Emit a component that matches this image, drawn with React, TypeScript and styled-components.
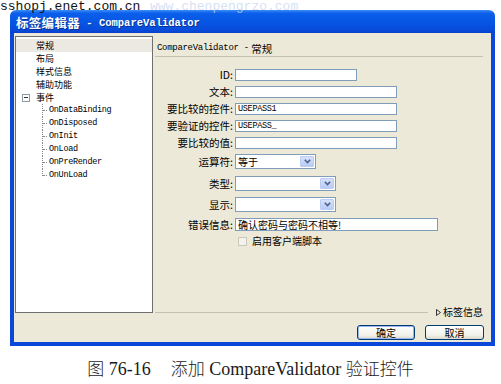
import React from 'react';
import styled, { createGlobalStyle } from 'styled-components';

const GlobalStyle = createGlobalStyle`
    html, body {
        margin: 0;
        padding: 0;
        background: #fff;
    }
    body {
        font-family: "Noto Sans CJK SC", "Liberation Sans", sans-serif;
        color: #000;
    }
`;

const Page = styled.div`
    position: relative;
    box-sizing: border-box;
    width: 501px;
    height: 384px;
    padding: 10px 0 0 10px;
    overflow: hidden;
    background: #fff;
`;

const Watermark = styled.div<{ $x: number; $color: string }>`
    position: absolute;
    top: 0;
    left: ${(p) => p.$x}px;
    z-index: 2;
    font-family: "Liberation Mono", monospace;
    font-size: 13px;
    line-height: 13px;
    color: ${(p) => p.$color};
    white-space: nowrap;
`;

const Window = styled.div`
    display: flex;
    flex-direction: column;
    width: 485px;
    height: 336px;
`;

const TitleBar = styled.div`
    display: flex;
    align-items: center;
    height: 23px;
    padding: 2px 0 0 6px;
    box-sizing: border-box;
    border-radius: 6px 6px 0 0;
    background: linear-gradient(#3d8df7 0%, #0b5fea 14%, #0655e4 55%, #0a4ad9 90%, #0840c8 100%);
    color: #fff;
    font-weight: 700;
    text-shadow: 1px 1px 0 #0a2f8f;
    white-space: nowrap;
`;

const TitleCn = styled.span`
    font-size: 12.5px;
    letter-spacing: 0.3px;
`;

const TitleLatin = styled.span`
    font-family: "Liberation Mono", monospace;
    font-size: 10.5px;
`;

const Frame = styled.div`
    flex: 1;
    display: flex;
    flex-direction: column;
    border: 4px solid #0b48d9;
    border-top: none;
    background: #ece9d8;
`;

const Content = styled.div`
    display: flex;
    height: 283px;
    padding: 3px 0 0 1px;
`;

const Tree = styled.div`
    box-sizing: border-box;
    width: 138px;
    height: 277px;
    padding-top: 2px;
    border: 1px solid #6f6f6f;
    background: #fff;
`;

const TreeRow = styled.div<{ $selected?: boolean; $indent: number }>`
    display: flex;
    align-items: center;
    height: 13px;
    padding-left: ${(p) => p.$indent}px;
    background: ${(p) => (p.$selected ? '#ebe9e1' : 'transparent')};
    font-size: 9px;
    line-height: 13px;
`;

const Expander = styled.span`
    position: relative;
    box-sizing: border-box;
    width: 8px;
    height: 8px;
    margin-right: 6px;
    border: 1px solid #8e9aa6;
    background: #fff;

    &::after {
        content: '';
        position: absolute;
        left: 1px;
        top: 2px;
        width: 4px;
        height: 1px;
        background: #333;
    }
`;

const ChildList = styled.div`
    margin-left: 26px;
`;

const ChildItem = styled.div<{ $last?: boolean }>`
    position: relative;
    height: 13px;
    padding-left: 7px;
    font-family: "Liberation Mono", monospace;
    font-size: 8.5px;
    letter-spacing: -0.3px;
    line-height: 13px;

    &::before {
        content: '';
        position: absolute;
        left: 0;
        top: 0;
        height: ${(p) => (p.$last ? '7px' : '13px')};
        border-left: 1px dotted #8a8a8a;
    }

    &::after {
        content: '';
        position: absolute;
        left: 1px;
        top: 6px;
        width: 4px;
        border-top: 1px dotted #8a8a8a;
    }
`;

const Main = styled.div`
    flex: 1;
    display: flex;
    flex-direction: column;
    margin: 0 8px 0 2px;
`;

const Header = styled.div`
    display: flex;
    align-items: center;
    height: 21px;
    padding: 4px 0 0 2px;
    box-sizing: border-box;
    border-bottom: 1px solid #c5c2b2;
    white-space: nowrap;
`;

const HeaderLatin = styled.span`
    font-family: "Liberation Mono", monospace;
    font-size: 9px;
    letter-spacing: -0.3px;
`;

const HeaderCn = styled.span`
    font-size: 10.5px;
`;

const Form = styled.div`
    display: flex;
    flex-direction: column;
    padding-top: 12px;
`;

const FieldRow = styled.div<{ $h: number; $gap: number }>`
    display: flex;
    align-items: center;
    height: ${(p) => p.$h}px;
    margin-top: ${(p) => p.$gap}px;
`;

const Label = styled.span`
    width: 80px;
    padding-right: 2px;
    box-sizing: border-box;
    text-align: right;
    font-size: 10.5px;
    line-height: 12px;
    white-space: nowrap;
`;

const TextBox = styled.div<{ $w: number; $h: number }>`
    display: flex;
    align-items: center;
    box-sizing: border-box;
    width: ${(p) => p.$w}px;
    height: ${(p) => p.$h}px;
    padding-left: 2px;
    border: 1px solid #7f9db9;
    background: #fff;
    white-space: nowrap;
    overflow: hidden;
`;

const MonoValue = styled.span`
    font-family: "Liberation Mono", monospace;
    font-size: 8.5px;
    letter-spacing: -0.3px;
`;

const CnValue = styled.span`
    font-size: 10px;
    line-height: 12px;
`;

const SelectBox = styled.div<{ $w: number }>`
    display: flex;
    align-items: center;
    box-sizing: border-box;
    width: ${(p) => p.$w}px;
    height: 15px;
    padding: 0 1px 0 2px;
    border: 1px solid #7f9db9;
    background: #fff;
`;

const SelectValue = styled.span`
    flex: 1;
    font-size: 10px;
    line-height: 12px;
`;

const DropButton = styled.span`
    display: flex;
    align-items: center;
    justify-content: center;
    box-sizing: border-box;
    width: 14px;
    height: 11px;
    border: 1px solid #bccdf5;
    border-radius: 1px;
    background: linear-gradient(#d6e1fb, #b7cbf6);
`;

const CheckRow = styled.div`
    display: flex;
    align-items: center;
    height: 12px;
    margin-top: 4px;
    padding-left: 83px;
`;

const CheckBox = styled.span`
    box-sizing: border-box;
    width: 9px;
    height: 9px;
    margin-right: 5px;
    border: 1px solid #cac8bb;
    background: #f3f2ec;
`;

const CheckText = styled.span`
    font-size: 10px;
    line-height: 12px;
`;

const Footer = styled.div`
    display: flex;
    align-items: center;
    height: 14px;
    margin-top: auto;
`;

const FooterLine = styled.div`
    flex: 1;
    border-top: 1px solid #c5c2b2;
`;

const MoreLink = styled.span`
    display: flex;
    align-items: center;
    gap: 2px;
    margin-left: 8px;
    font-size: 10px;
    line-height: 12px;
    white-space: nowrap;
`;

const ButtonRow = styled.div`
    display: flex;
    justify-content: flex-end;
    gap: 10px;
    height: 15px;
    margin-top: 6px;
    padding-right: 7px;
`;

const Button = styled.div<{ $w: number; $default?: boolean }>`
    display: flex;
    align-items: center;
    justify-content: center;
    box-sizing: border-box;
    width: ${(p) => p.$w}px;
    height: 15px;
    border: 1px solid #003c74;
    border-radius: 3px;
    background: linear-gradient(#ffffff, #f2f1ea 70%, #dcd8cb);
    box-shadow: ${(p) => (p.$default ? 'inset 0 0 0 1px #9ab8ef' : 'none')};
    font-size: 10px;
    line-height: 12px;
`;

const Caption = styled.div`
    display: flex;
    justify-content: center;
    gap: 20px;
    width: 501px;
    margin: 11px 0 0 -10px;
    font-family: "Liberation Serif", "Noto Sans CJK SC", serif;
    font-size: 18px;
    line-height: 22px;
    color: #1a1a1a;
    white-space: nowrap;
`;

const CaptionCn = styled.span`
    font-family: "Noto Sans CJK SC", sans-serif;
    font-weight: 300;
    font-size: 17px;
`;

const Chevron = () => (
    <svg width="7" height="5" viewBox="0 0 7 5">
        <polyline points="0.8,0.8 3.5,3.6 6.2,0.8" fill="none" stroke="#4d6185" strokeWidth="1.6" />
    </svg>
);

const Triangle = () => (
    <svg width="5" height="7" viewBox="0 0 5 7">
        <polygon points="0.5,0.5 4.5,3.5 0.5,6.5" fill="none" stroke="#222" strokeWidth="0.9" />
    </svg>
);

interface Field {
    label: string;
    kind: 'text' | 'select';
    width: number;
    height: number;
    gap: number;
    value?: string;
    mono?: boolean;
}

const fields: Field[] = [
    { label: 'ID:', kind: 'text', width: 122, height: 12, gap: 0 },
    { label: '文本:', kind: 'text', width: 162, height: 12, gap: 5 },
    { label: '要比较的控件:', kind: 'text', width: 162, height: 12, gap: 5, value: 'USEPASS1', mono: true },
    { label: '要验证的控件:', kind: 'text', width: 162, height: 12, gap: 5, value: 'USEPASS_', mono: true },
    { label: '要比较的值:', kind: 'text', width: 162, height: 12, gap: 5 },
    { label: '运算符:', kind: 'select', width: 81, height: 15, gap: 5, value: '等于' },
    { label: '类型:', kind: 'select', width: 101, height: 15, gap: 7 },
    { label: '显示:', kind: 'select', width: 101, height: 15, gap: 6 },
    { label: '错误信息:', kind: 'text', width: 203, height: 13, gap: 6, value: '确认密码与密码不相等!' },
];

const topItems = ['常规', '布局', '样式信息', '辅助功能'];
const events = ['OnDataBinding', 'OnDisposed', 'OnInit', 'OnLoad', 'OnPreRender', 'OnUnLoad'];

const App: React.FC = () => {
    return (
        <>
            <GlobalStyle />
            <Page>
                <Watermark $x={0} $color="#111">sshopj.enet.com.cn</Watermark>
                <Watermark $x={150} $color="rgba(200, 215, 240, 0.75)">www.chenpengrzo.com</Watermark>

                <Window>
                    <TitleBar>
                        <TitleCn>标签编辑器</TitleCn>
                        <TitleLatin>&nbsp;- CompareValidator</TitleLatin>
                    </TitleBar>

                    <Frame>
                        <Content>
                            <Tree>
                                {topItems.map((item, i) => (
                                    <TreeRow key={item} $indent={20} $selected={i === 0}>
                                        {item}
                                    </TreeRow>
                                ))}
                                <TreeRow $indent={6}>
                                    <Expander />
                                    事件
                                </TreeRow>
                                <ChildList>
                                    {events.map((ev, i) => (
                                        <ChildItem key={ev} $last={i === events.length - 1}>
                                            {ev}
                                        </ChildItem>
                                    ))}
                                </ChildList>
                            </Tree>

                            <Main>
                                <Header>
                                    <HeaderLatin>CompareValidator - </HeaderLatin>
                                    <HeaderCn>&nbsp;常规</HeaderCn>
                                </Header>

                                <Form>
                                    {fields.map((f) => (
                                        <FieldRow key={f.label} $h={f.height} $gap={f.gap}>
                                            <Label>{f.label}</Label>
                                            {f.kind === 'text' ? (
                                                <TextBox $w={f.width} $h={f.height}>
                                                    {f.value &&
                                                        (f.mono ? (
                                                            <MonoValue>{f.value}</MonoValue>
                                                        ) : (
                                                            <CnValue>{f.value}</CnValue>
                                                        ))}
                                                </TextBox>
                                            ) : (
                                                <SelectBox $w={f.width}>
                                                    <SelectValue>{f.value}</SelectValue>
                                                    <DropButton>
                                                        <Chevron />
                                                    </DropButton>
                                                </SelectBox>
                                            )}
                                        </FieldRow>
                                    ))}
                                    <CheckRow>
                                        <CheckBox />
                                        <CheckText>启用客户端脚本</CheckText>
                                    </CheckRow>
                                </Form>

                                <Footer>
                                    <FooterLine />
                                    <MoreLink>
                                        <Triangle />
                                        标签信息
                                    </MoreLink>
                                </Footer>
                            </Main>
                        </Content>

                        <ButtonRow>
                            <Button $w={58} $default>
                                确定
                            </Button>
                            <Button $w={59}>取消</Button>
                        </ButtonRow>
                    </Frame>
                </Window>

                <Caption>
                    <span>
                        <CaptionCn>图</CaptionCn> 76-16
                    </span>
                    <span>
                        <CaptionCn>添加</CaptionCn> CompareValidator <CaptionCn>验证控件</CaptionCn>
                    </span>
                </Caption>
            </Page>
        </>
    );
};

export default App;
